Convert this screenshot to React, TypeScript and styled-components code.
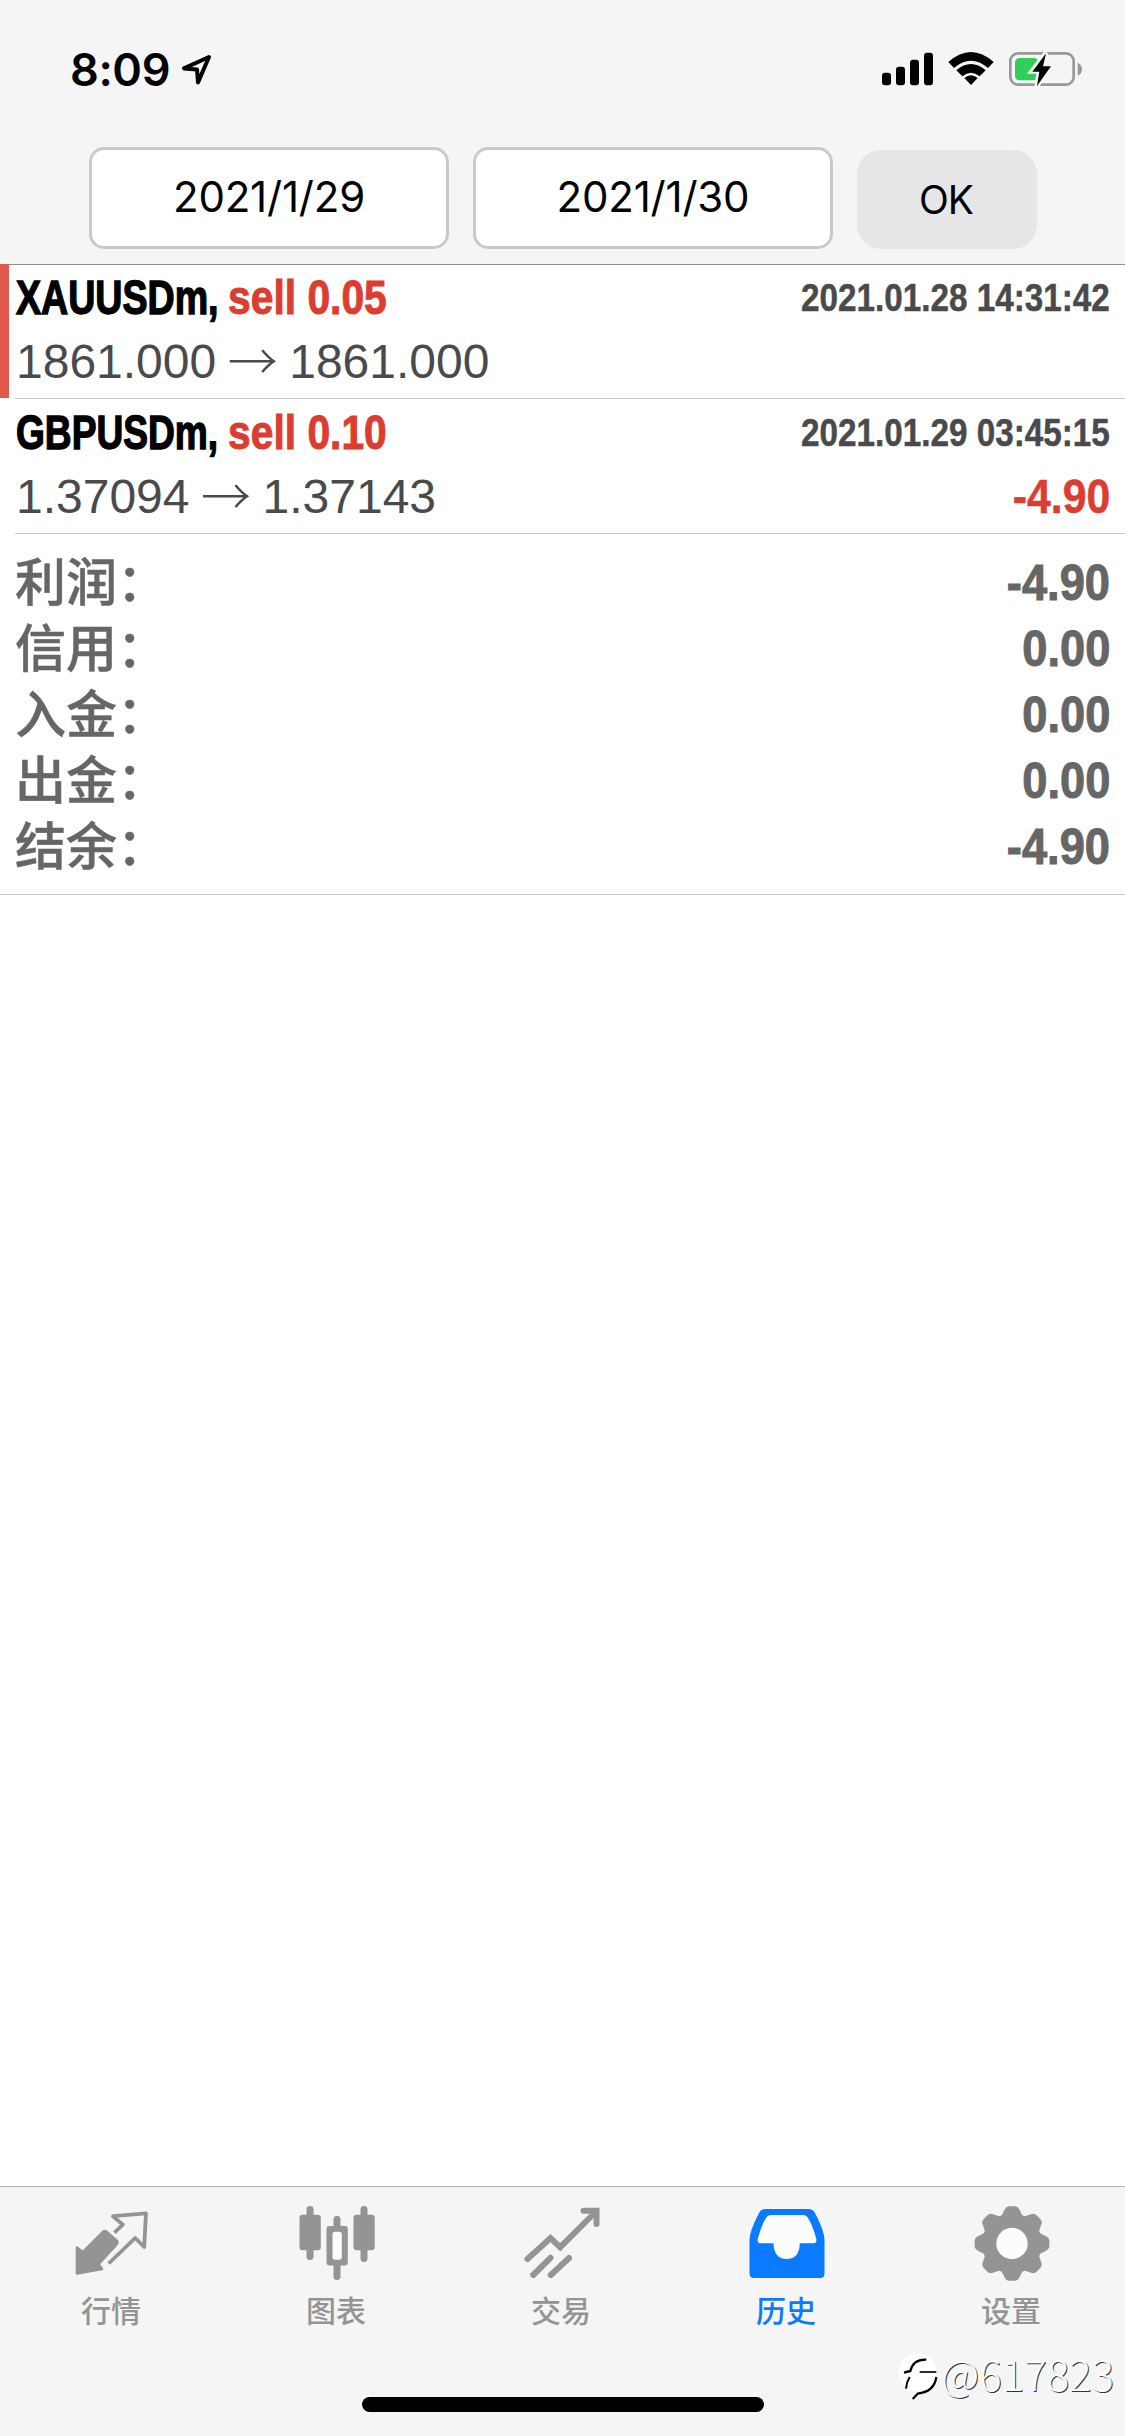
import React from "react";
import styled, { createGlobalStyle } from "styled-components";

const UI = `"Inter", "Liberation Sans", "Noto Sans CJK SC", sans-serif`;
const HELV = `"Liberation Sans", "Noto Sans CJK SC", sans-serif`;
const CJK = `"Noto Sans CJK SC", "Liberation Sans", sans-serif`;

const GlobalStyle = createGlobalStyle`
  * { box-sizing: border-box; }
  body { margin: 0; background: #fff; }
  #root { height: 2436px; }
`;

const Screen = styled.div`
  position: relative;
  display: flex;
  flex-direction: column;
  width: 1125px;
  height: 2436px;
  overflow: hidden;
  background: #fff;
  font-family: ${HELV};
`;

const Header = styled.header`
  flex: none;
  height: 265px;
  background: #f5f5f5;
  border-bottom: 1px solid #8e8e90;
`;

const StatusBar = styled.div`
  display: flex;
  align-items: flex-start;
  justify-content: space-between;
  height: 147px;
  padding: 40px 25px 0 70px;
`;

const Clock = styled.div`
  display: flex;
  align-items: center;
  gap: 11px;
  font: 600 45px/60px ${UI};
  letter-spacing: -0.4px;
  color: #000;
`;

const FilterRow = styled.div`
  display: flex;
  align-items: flex-start;
  gap: 24px;
  padding-left: 89px;
`;

const DateField = styled.button`
  width: 360px;
  height: 102px;
  padding: 0 0 3px;
  border: 3px solid #c9c9c9;
  border-radius: 15px;
  background: #fff;
  color: #000;
  font: 400 42px/60px ${UI};
  letter-spacing: -0.2px;
`;

const OkButton = styled.button`
  width: 180px;
  height: 99px;
  margin-top: 3px;
  padding: 1px 2px 0 0;
  border: 0;
  border-radius: 24px;
  background: #e6e6e8;
  color: #000;
  font: 400 39px/60px ${UI};
  letter-spacing: -1px;
`;

const DealList = styled.section`
  flex: none;
  margin-top: -1px;
`;

const Deal = styled.article<{ $marked?: boolean }>`
  display: flex;
  height: 135px;
  &::before {
    content: "";
    width: 9px;
    height: 134px;
    background: ${(p) => (p.$marked ? "#e0594b" : "transparent")};
  }
`;

const DealBody = styled.div`
  flex: 1;
  margin-left: 6px;
  padding: 2px 15px 0 0;
  border-bottom: 1px solid #c4c4c6;
`;

const Line = styled.div`
  display: flex;
  justify-content: space-between;
  height: 64px;
  line-height: 64px;
  white-space: nowrap;
`;

/* Bold text squeezed horizontally to a condensed cut, anchored to one side */
const Condensed = styled.span<{
  $size: number;
  $scale: number;
  $color: string;
  $right?: boolean;
  $stroke?: number;
}>`
  display: block;
  font-weight: 700;
  font-size: ${(p) => p.$size}px;
  color: ${(p) => p.$color};
  -webkit-text-stroke: ${(p) => p.$stroke ?? 1}px ${(p) => p.$color};
  transform: scaleX(${(p) => p.$scale});
  transform-origin: ${(p) => (p.$right ? "right" : "left")} center;
`;

const Symbol = styled.div`
  width: 213px;
  padding-left: 1px;
`;

const Title = styled.div`
  display: flex;
`;

const Stamp = styled.div`
  margin-top: -1px;
`;

const Prices = styled.div`
  display: flex;
  padding-left: 1px;
  font-size: 48px;
  color: #4a4a4c;
`;

const Arrow = styled.span`
  width: 73px;
  margin-top: -4px;
  text-align: center;
  font: 300 50px/64px ${CJK};
`;

const Summary = styled.section`
  flex: none;
  padding: 16px 15px 14px;
  border-bottom: 1px solid #c4c4c6;
`;

const SummaryRow = styled.div`
  display: flex;
  justify-content: space-between;
  height: 66px;
  line-height: 66px;
`;

const SummaryLabel = styled.div`
  margin-top: -4px;
  font-family: ${CJK};
  font-weight: 500;
  font-size: 51px;
  color: #666;
  -webkit-text-stroke: 0.5px #666;
`;

const TabBar = styled.nav`
  flex: none;
  height: 250px;
  margin-top: auto;
  border-top: 1px solid #b2b2b2;
  background: #f5f5f5;
`;

const Tabs = styled.div`
  display: grid;
  grid-template-columns: repeat(5, 225px);
  height: 210px;
`;

const Tab = styled.div<{ $active?: boolean }>`
  display: flex;
  flex-direction: column;
  align-items: center;
  padding-top: 17px;
  color: ${(p) => (p.$active ? "#0a7aff" : "#949494")};
`;

const TabLabel = styled.span`
  margin: 7px 3px 0 0;
  font: 500 30px/40px ${CJK};
`;

const HomeIndicator = styled.div`
  width: 402px;
  height: 15px;
  margin: 0 auto;
  border-radius: 8px;
  background: #000;
`;

const Watermark = styled.div`
  position: absolute;
  left: 895px;
  top: 2345px;
  display: flex;
  color: #fcfcfc;
  font: 300 42px/55px ${CJK};
  text-shadow: 1px 1px 0.5px rgba(0, 0, 0, 0.8);
`;

const LocationIcon = () => (
  <svg width="31" height="32" viewBox="0 0 31 32">
    <path
      d="M28 3 L3 14.4 L16 15.4 L17 28.4 Z"
      fill="none"
      stroke="#000"
      strokeWidth="4"
      strokeLinejoin="round"
    />
  </svg>
);

const StatusIcons = () => (
  <svg width="230" height="70" viewBox="0 0 690 210">
    <rect x="36" y="98" width="27" height="38" rx="9" />
    <rect x="78" y="80" width="27" height="56" rx="9" />
    <rect x="120" y="59" width="27" height="77" rx="9" />
    <rect x="162" y="38" width="27" height="98" rx="9" />
    <path d="M235 66 Q303 6 371 66 L354 84 Q303 40 252 84 Z" />
    <path d="M259 91 Q303 53 347 91 L329 109 Q303 87 277 109 Z" />
    <path d="M283 114 Q303 97 323 114 L303 135 Z" />
    <rect x="421" y="40" width="190" height="94" rx="23" fill="none" stroke="#989898" strokeWidth="8" />
    <path d="M623 68 Q636 74 636 87.500 Q636 101 623 107 Z" fill="#989898" />
    <rect x="435" y="54" width="70" height="67" rx="13" fill="#30cf58" />
    <path
      d="M528 38 L485 94 H507 L500 138 L544 79 H519 Z"
      stroke="#f5f5f5"
      strokeWidth="14"
      fill="#f5f5f5"
    />
    <path d="M528 40 L487 95 H508 L501 138 L543 79 H519 Z" />
  </svg>
);

const QuotesIcon = () => (
  <svg width="78" height="78" viewBox="0 0 78 78">
    <path
      d="M3 43.500 L8.800 48.200 L29 27.800 Q30.800 26.500 32.500 27.800 L43 37 Q44 38.400 43 39.800 L24.500 60 L28 65 L3 69.500 Z"
      fill="currentColor"
      stroke="currentColor"
      strokeWidth="2.6"
      strokeLinejoin="round"
    />
    <path
      d="M40.500 28.700 L48.800 20.600 L39 12.200 L72 9.300 L70.200 43 L61.200 34 L34.700 59.500"
      fill="none"
      stroke="currentColor"
      strokeWidth="3.8"
      strokeLinejoin="round"
    />
  </svg>
);

const ChartIcon = () => (
  <svg width="78" height="78" viewBox="0 0 78 78" fill="currentColor">
    <rect x="7.500" y="2" width="7" height="54" rx="3.400" />
    <rect x="0.500" y="10.700" width="21.300" height="35.600" rx="3" />
    <rect x="34.500" y="12" width="7" height="64" rx="3.400" />
    <rect x="27.500" y="22" width="21.300" height="39.500" rx="3" />
    <rect x="33.500" y="27.700" width="9.300" height="28" rx="2.500" fill="#fcfcfc" />
    <rect x="61.500" y="2" width="7" height="56" rx="3.400" />
    <rect x="54.500" y="10.700" width="21.200" height="35.600" rx="3" />
  </svg>
);

const TradeIcon = () => (
  <svg
    width="78"
    height="78"
    viewBox="0 0 78 78"
    fill="none"
    stroke="currentColor"
    strokeWidth="6"
    strokeLinecap="round"
  >
    <path d="M3.500 55 L26.500 34 L36.200 43.200 L71.500 8" />
    <path d="M59.500 6.800 H72.500 V20" />
    <path d="M9.200 71 L26.500 53.800 M26.800 71 L45 54" />
  </svg>
);

const HistoryIcon = () => (
  <svg width="78" height="78" viewBox="0 0 78 78">
    <path
      d="M16.500 5 H59.500 Q64 5 66 9 Q75.500 27 75.500 36 V69.500 Q75.500 74 71 74 H5 Q0.500 74 0.500 69.500 V36 Q0.500 27 10 9 Q12 5 16.500 5 Z"
      fill="currentColor"
    />
    <path
      d="M22.500 11 H54 Q57.500 11 59 14 Q64 22 67.300 35 Q68 39.300 64.500 39.300 H50.800 Q50.500 55 37.700 55 Q25 55 24.500 39.300 H11.500 Q8 39.300 8.700 35 Q12 22 17 14 Q18.500 11 22.500 11 Z"
      fill="#fcfcfc"
    />
  </svg>
);

const gearPath = (() => {
  const at = (r: number, deg: number) => {
    const a = (deg * Math.PI) / 180;
    return `${(38 + r * Math.sin(a)).toFixed(2)} ${(39.5 - r * Math.cos(a)).toFixed(2)}`;
  };
  let d = "";
  for (let i = 0; i < 8; i++) {
    const c = i * 45;
    d += `${i ? "L" : "M"}${at(30, c - 20)} L${at(34.5, c - 12.5)} Q${at(37.3, c - 10)} ${at(37.5, c - 5)} L${at(37.5, c + 5)} Q${at(37.3, c + 10)} ${at(34.5, c + 12.5)} L${at(30, c + 20)} `;
  }
  return d + "Z";
})();

const SettingsIcon = () => (
  <svg width="78" height="78" viewBox="0 0 78 78">
    <path d={gearPath} fill="currentColor" />
    <circle cx="38" cy="39.500" r="15.700" fill="#fcfcfc" />
  </svg>
);

const WatermarkLogo = () => (
  <svg width="46" height="62" viewBox="0 0 138 186">
    <circle cx="68" cy="82" r="57" fill="#fff" />
    <g fill="none" stroke="#000">
      <path d="M27 83 L46 78 Q55 42 94 44" strokeWidth="7" />
      <path d="M74 81 H124" strokeWidth="5" />
      <path d="M44 96 Q35 110 33 131" strokeWidth="6" />
      <path d="M124 96 Q118 140 68 146 L53 162" strokeWidth="6.500" />
    </g>
  </svg>
);

const RED = "#dc3d31";

const deals = [
  { symbol: "XAUUSDm,", squeeze: 0.783, side: "sell 0.05", time: "2021.01.28 14:31:42", open: "1861.000", close: "1861.000", profit: "", marked: true },
  { symbol: "GBPUSDm,", squeeze: 0.773, side: "sell 0.10", time: "2021.01.29 03:45:15", open: "1.37094", close: "1.37143", profit: "-4.90", marked: false },
];

const totals = [
  ["利润：", "-4.90"],
  ["信用：", "0.00"],
  ["入金：", "0.00"],
  ["出金：", "0.00"],
  ["结余：", "-4.90"],
];

const tabs = [
  { label: "行情", Icon: QuotesIcon },
  { label: "图表", Icon: ChartIcon },
  { label: "交易", Icon: TradeIcon },
  { label: "历史", Icon: HistoryIcon, active: true },
  { label: "设置", Icon: SettingsIcon },
];

export default function App() {
  return (
    <>
      <GlobalStyle />
      <Screen>
        <Header>
          <StatusBar>
            <Clock>
              8:09
              <LocationIcon />
            </Clock>
            <StatusIcons />
          </StatusBar>
          <FilterRow>
            <DateField>2021/1/29</DateField>
            <DateField>2021/1/30</DateField>
            <OkButton>OK</OkButton>
          </FilterRow>
        </Header>

        <DealList>
          {deals.map((d) => (
            <Deal key={d.symbol} $marked={d.marked}>
              <DealBody>
                <Line>
                  <Title>
                    <Symbol>
                      <Condensed $size={48} $scale={d.squeeze} $color="#000" $stroke={1.4}>
                        {d.symbol}
                      </Condensed>
                    </Symbol>
                    <Condensed $size={48} $scale={0.85} $color={RED}>
                      {d.side}
                    </Condensed>
                  </Title>
                  <Stamp>
                    <Condensed $size={39.5} $scale={0.842} $color="#4a4a4c" $right $stroke={0.5}>
                      {d.time}
                    </Condensed>
                  </Stamp>
                </Line>
                <Line>
                  <Prices>
                    <span>{d.open}</span>
                    <Arrow>→</Arrow>
                    <span>{d.close}</span>
                  </Prices>
                  <Condensed $size={47.5} $scale={0.9} $color={RED} $right $stroke={0.5}>
                    {d.profit}
                  </Condensed>
                </Line>
              </DealBody>
            </Deal>
          ))}
        </DealList>

        <Summary>
          {totals.map(([label, value]) => (
            <SummaryRow key={label}>
              <SummaryLabel>{label}</SummaryLabel>
              <Condensed $size={50} $scale={0.905} $color="#666" $right>
                {value}
              </Condensed>
            </SummaryRow>
          ))}
        </Summary>

        <TabBar>
          <Tabs>
            {tabs.map(({ label, Icon, active }) => (
              <Tab key={label} $active={active}>
                <Icon />
                <TabLabel>{label}</TabLabel>
              </Tab>
            ))}
          </Tabs>
          <HomeIndicator />
        </TabBar>

        <Watermark>
          <WatermarkLogo />
          @617823
        </Watermark>
      </Screen>
    </>
  );
}
